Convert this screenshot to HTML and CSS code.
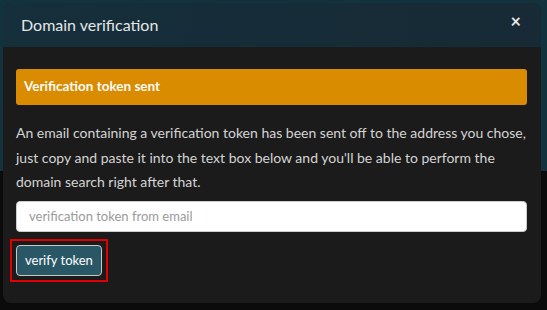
FILE: index.html
```html
<!DOCTYPE html>
<html lang="en">
<head>
    <meta charset="UTF-8">
    <meta name="viewport" content="width=device-width, initial-scale=1.0">
    <title>Domain verification</title>
    <link rel="stylesheet" href="styles.css">
</head>
<body>
    <div class="backdrop">
        <div class="modal">
            <div class="modal-header">
                <h4 class="modal-title">Domain verification</h4>
                <span class="close">&times;</span>
            </div>
            <div class="modal-body">
                <div class="alert">Verification token sent</div>
                <p class="info">An email containing a verification token has been sent off to the address you chose, just copy and paste it into the text box below and you'll be able to perform the domain search right after that.</p>
                <input class="token-input" type="text" placeholder="verification token from email">
                <div class="highlight">
                    <button class="btn">verify token</button>
                </div>
            </div>
        </div>
    </div>
</body>
</html>
```

FILE: styles.css
```css
html,
body {
    margin: 0;
    height: 100%;
}
body {
    background: linear-gradient(to bottom, #12323e 0, #12323e 171px, #0b0b0b 171px);
    font-family: Lato, "Noto Sans", sans-serif;
}
.backdrop {
    padding: 3px 6px 0 3px;
}
.modal {
    background-color: #1b1b1b;
    border-radius: 8px;
    overflow: hidden;
    height: 300px;
}
.modal-header {
    display: flex;
    justify-content: space-between;
    align-items: flex-start;
    height: 44px;
    padding: 0 20px 0 18px;
    background: linear-gradient(100deg, #152f3b 0%, #172a35 100%);
}
.modal-title {
    margin: 0;
    padding-top: 12px;
    font-size: 16px;
    font-weight: 400;
    color: #e6e6e6;
}
.close {
    padding-top: 7px;
    font-size: 18px;
    font-weight: 700;
    color: #e8e8e8;
}
.modal-body {
    padding: 22px 14px 0 13px;
}
.alert {
    background-color: #da8c00;
    border-radius: 3px;
    height: 36px;
    line-height: 35px;
    padding-left: 8px;
    font-size: 13.5px;
    font-weight: 700;
    color: #fbfbfb;
}
.info {
    margin: 16px 0 6px;
    font-size: 14px;
    line-height: 24.5px;
    color: #d4d4d4;
}
.token-input {
    display: block;
    box-sizing: border-box;
    width: 100%;
    height: 31px;
    padding: 0 12px;
    border: 1px solid #ccc;
    border-radius: 4px;
    background: #fff;
    font-family: inherit;
    font-size: 13px;
}
.token-input::placeholder {
    color: #9a9a9a;
}
.highlight {
    display: inline-block;
    margin: 7px 0 0 -6px;
    padding: 4px;
    border: 2px solid #e00000;
}
.btn {
    display: block;
    height: 31px;
    padding: 0 8px;
    border: 1px solid #c8c8c8;
    border-radius: 4px;
    background-color: #2a5766;
    color: #fff;
    font-family: inherit;
    font-size: 13px;
    font-weight: 400;
}
```
